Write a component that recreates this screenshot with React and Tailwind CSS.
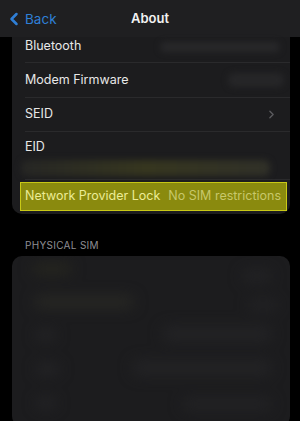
import React from 'react';
import { ChevronLeft, ChevronRight } from 'lucide-react';

const font = { fontFamily: 'Inter, "Liberation Sans", sans-serif' };

const Blur = ({ className }) => (
  <div className={`rounded-md blur-[3px] ${className}`} />
);

const App = () => {
  return (
    <div className="w-[300px] h-[421px] overflow-hidden bg-black text-white" style={font}>
      {/* Nav bar */}
      <header className="h-[37px] bg-[#1f1f21] flex items-center relative">
        <div className="flex items-center text-[#2f7fd6] pl-[4px] mt-[1px]">
          <ChevronLeft className="w-[20px] h-[22px]" strokeWidth={3} />
          <span className="text-[13.5px] ml-[1px]">Back</span>
        </div>
        <span className="absolute left-1/2 -translate-x-1/2 mt-[1px] text-[13px] font-semibold text-[#f2f2f2]">About</span>
      </header>

      {/* Main card */}
      <div className="ml-[12px] mr-[10px] bg-[#1c1c1e] rounded-b-[10px]">
        <div className="pl-[13px]">
          <div className="h-[26px] flex items-center justify-between border-b border-[#2a2a2c] pr-[10px]">
            <span className="text-[12.5px] text-[#e8e8e8] -mt-[6px]">Bluetooth</span>
            <Blur className="w-[120px] h-[10px] bg-[#28282a] -mt-[6px]" />
          </div>
          <div className="h-[35px] flex items-center justify-between border-b border-[#2a2a2c] pr-[6px]">
            <span className="text-[12.5px] text-[#e8e8e8]">Modem Firmware</span>
            <Blur className="w-[56px] h-[14px] bg-[#262628]" />
          </div>
          <div className="h-[34px] flex items-center justify-between border-b border-[#2a2a2c] pr-[12px]">
            <span className="text-[12.5px] text-[#e8e8e8]">SEID</span>
            <ChevronRight className="w-[13px] h-[13px] text-[#5a5a5e]" strokeWidth={2.5} />
          </div>
          <div className="h-[48px] flex flex-col justify-start pt-[7px] border-b border-[#2a2a2c] pr-[20px]">
            <span className="text-[12.5px] text-[#e8e8e8] leading-[16px]">EID</span>
            <Blur className="mt-[5px] -ml-[4px] h-[16px] bg-gradient-to-r from-[#262624] via-[#36361f] to-[#303028]" />
          </div>
        </div>
        <div className="pl-[8px] pr-[3px] pt-[2px] pb-[3px]">
          <div className="h-[29px] flex items-center gap-[8px] px-[4px] bg-[#8a8a0e] border border-[#c9c916]">
            <span className="text-[12.5px] text-[#ecec96] whitespace-nowrap">Network Provider Lock</span>
            <span className="text-[12.5px] text-[#c7c76a] whitespace-nowrap">No SIM restrictions</span>
          </div>
        </div>
      </div>

      {/* Physical SIM */}
      <div className="pl-[25px] pt-[25px] pb-[5px] leading-[12px] text-[10px] tracking-[0.3px] text-[#8e8e93]">PHYSICAL SIM</div>
      <div className="ml-[12px] mr-[10px] h-[170px] bg-[#1c1c1e] rounded-[10px] relative overflow-hidden">
        <div className="absolute inset-0 blur-[7px]">
          <div className="absolute left-[20px] top-[8px] w-[40px] h-[10px] bg-[#27271f] rounded-full" />
          <div className="absolute left-[22px] top-[40px] w-[100px] h-[12px] bg-[#282824] rounded-full" />
          <div className="absolute left-[24px] top-[74px] w-[20px] h-[10px] bg-[#252527] rounded-full" />
          <div className="absolute left-[24px] top-[108px] w-[24px] h-[10px] bg-[#252527] rounded-full" />
          <div className="absolute left-[24px] top-[142px] w-[20px] h-[10px] bg-[#252527] rounded-full" />
          <div className="absolute left-[150px] top-[70px] w-[110px] h-[16px] bg-[#232325] rounded-full" />
          <div className="absolute left-[120px] top-[104px] w-[140px] h-[16px] bg-[#232325] rounded-full" />
          <div className="absolute left-[170px] top-[142px] w-[90px] h-[12px] bg-[#232325] rounded-full" />
          <div className="absolute left-[230px] top-[14px] w-[30px] h-[12px] bg-[#232325] rounded-full" />
          <div className="absolute left-[236px] top-[44px] w-[30px] h-[10px] bg-[#232325] rounded-full" />
        </div>
      </div>
    </div>
  );
};

export default App;
